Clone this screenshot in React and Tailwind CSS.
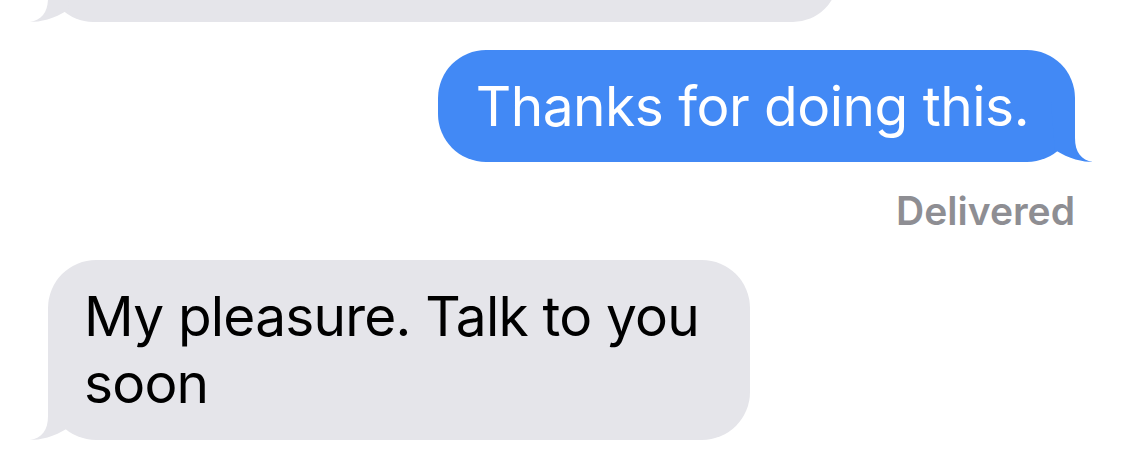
function Tail({ side, color }) {
  // little curled tail at the bottom corner of a bubble
  const right = side === "right";
  return (
    <svg
      className={`absolute bottom-0 ${right ? "right-[-20px]" : "left-[-20px]"}`}
      width="50"
      height="60"
      viewBox="0 0 50 60"
      style={{ transform: right ? "none" : "scaleX(-1)" }}
    >
      <path d="M6 0 L30 0 L30 36 C30 50 36 58 48 60 C38 60 24 57 10 48 Z" fill={color} />
    </svg>
  );
}

function Bubble({ side, children, className }) {
  const right = side === "right";
  return (
    <div
      className={`relative rounded-[48px] ${right ? "bg-[#4289f5] text-white" : "bg-[#e5e5ea] text-black"} ${className || ""}`}
    >
      <Tail side={side} color={right ? "#4289f5" : "#e5e5ea"} />
      <div className="relative">{children}</div>
    </div>
  );
}

export default function App() {
  return (
    <div
      className="w-full h-[462px] bg-white overflow-hidden flex flex-col"
      style={{ fontFamily: "Inter, 'Noto Sans', sans-serif" }}
    >
      <div className="ml-[48px] mt-[-68px]">
        <Bubble side="left" className="w-[790px] h-[90px]" />
      </div>

      <div className="flex justify-end pr-[50px] mt-[28px]">
        <Bubble side="right" className="pl-[38px] pr-[46px] py-[22px]">
          <p className="text-[55px] leading-[68px] tracking-[-0.5px]">Thanks for doing this.</p>
        </Bubble>
      </div>

      <div className="flex justify-end pr-[50px] mt-[27px]">
        <span className="text-[39px] leading-[44px] font-semibold text-[#8e8e93]">Delivered</span>
      </div>

      <div className="ml-[48px] mt-[27px]">
        <Bubble side="left" className="w-[702px] pl-[36px] pr-[40px] py-[23px]">
          <p className="text-[55px] leading-[67px] tracking-[-0.8px]">My pleasure. Talk to you soon</p>
        </Bubble>
      </div>
    </div>
  );
}
